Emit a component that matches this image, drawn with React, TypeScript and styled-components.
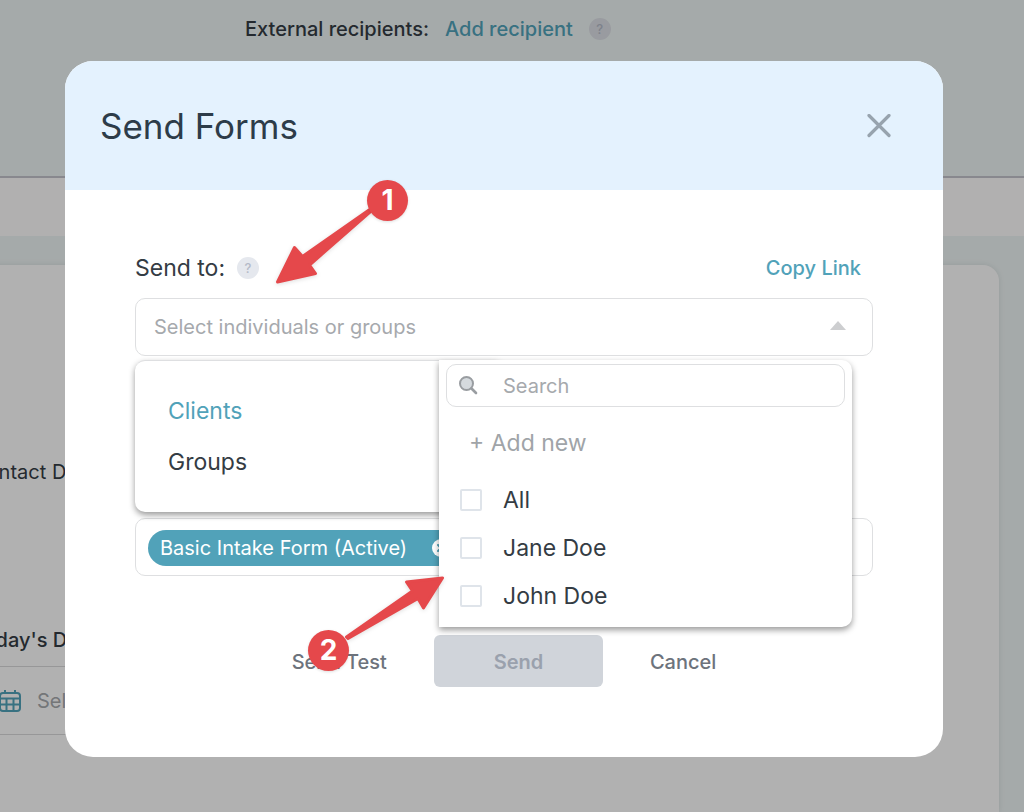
import React from "react";
import styled, { createGlobalStyle } from "styled-components";

const GlobalStyle = createGlobalStyle`
  * { box-sizing: border-box; }
  body {
    margin: 0;
    background: #edf4f4;
    color: #343c44;
    font-family: Inter, "Liberation Sans", sans-serif;
    font-size: 20px;
    line-height: 28px;
  }
  button, input { font: inherit; color: inherit; }
  button { border: 0; padding: 0; background: none; cursor: pointer; }
  a { color: #51a2b9; text-decoration: none; }
`;

const Page = styled.div`
  position: relative;
  min-height: 100vh;
  overflow: hidden;
  display: flex;
  flex-direction: column;
`;

const RecipientBar = styled.header`
  display: flex;
  align-items: flex-start;
  gap: 16px;
  height: 176px;
  padding: 15px 24px 0 245px;
  font-weight: 500;
`;

const TabStrip = styled.nav`
  height: 60px;
  border-top: 2px solid #c3c3cc;
  background: #fefdfd;
`;

const FormCard = styled.section`
  flex: 1;
  margin: 29px 25px 0 -52px;
  padding: 193px 0 0;
  border-radius: 0 16px 0 0;
  background: #fefefe;
  box-shadow: 0 0 6px #00000018;
`;

const FieldName = styled.label<{ $strong?: boolean }>`
  display: block;
  padding-left: 24px;
  font-weight: ${(p) => (p.$strong ? 500 : 400)};
`;

const DateField = styled.div`
  display: flex;
  align-items: center;
  gap: 16px;
  width: 60%;
  height: 69px;
  margin-top: 12px;
  padding-left: 50px;
  border: 1px solid #d8d8da;
  svg { flex: none; color: #51a2b9; }
`;

const PlainInput = styled.input`
  flex: 1;
  min-width: 0;
  padding: 0;
  border: 0;
  outline: 0;
  background: transparent;
  &::placeholder { color: #a6a9ad; opacity: 1; }
`;

const Spacer = styled.div`
  height: 140px;
`;

const Overlay = styled.div`
  position: absolute;
  inset: 0;
  padding: 61px 81px 54px 65px;
  background: #0000004d;
`;

const Dialog = styled.section`
  position: relative;
  border-radius: 28px;
  background: #fff;
`;

const DialogHeader = styled.header`
  display: flex;
  align-items: center;
  justify-content: space-between;
  height: 129px;
  padding: 0 52px 0 35px;
  border-radius: 28px 28px 0 0;
  background: #e4f2fe;
`;

const Title = styled.h2`
  margin: 0;
  color: #2d3c49;
  font-size: 35px;
  line-height: 44px;
  font-weight: 400;
`;

const IconButton = styled.button`
  display: flex;
  color: #97a3ae;
`;

const DialogBody = styled.form`
  padding: 64px 70px 70px;
`;

const LabelRow = styled.div`
  display: flex;
  align-items: center;
  gap: 12px;
  height: 28px;
  margin-bottom: 16px;
  font-size: 23px;
  a { margin-left: auto; padding-right: 12px; font-size: 20px; font-weight: 500; }
`;

const Help = styled.button<{ $dim?: boolean }>`
  width: 22px;
  height: 22px;
  margin-top: ${(p) => (p.$dim ? 3 : 0)}px;
  border-radius: 50%;
  background: ${(p) => (p.$dim ? "#dcdfe5" : "#e5e8ee")};
  color: #b4bac8;
  font-size: 13px;
  line-height: 22px;
  font-weight: 500;
`;

const SelectWrap = styled.div`
  position: relative;
`;

const Field = styled.div`
  display: flex;
  align-items: center;
  height: 58px;
  padding: 0 26px 0 18px;
  border: 1px solid #dedfe1;
  border-radius: 10px;
  background: #fff;
`;

const FormsField = styled(Field)`
  margin-top: 162px;
  padding: 2px 12px 0;
`;

const Chip = styled.span`
  display: flex;
  align-items: center;
  gap: 25px;
  height: 36px;
  padding: 0 12px;
  border-radius: 18px;
  background: #51a2b9;
  color: #fff;
`;

const ChipRemove = styled.button`
  width: 18px;
  height: 18px;
  display: flex;
  align-items: center;
  justify-content: center;
  border-radius: 50%;
  background: #fff;
  color: #51a2b9;
`;

const Menu = styled.div`
  position: absolute;
  z-index: 1;
  top: 62px;
  left: 0;
  width: 50%;
  display: flex;
  flex-direction: column;
  align-items: flex-start;
  gap: 19px;
  padding: 34px 33px 34px;
  border-top: 1px solid #dedfe1;
  border-radius: 10px;
  background: #fff;
  box-shadow: 0 3px 6px #00000066;
`;

const MenuItem = styled.button<{ $active?: boolean }>`
  height: 32px;
  font-size: 23px;
  color: ${(p) => (p.$active ? "#51a2b9" : "#343c44")};
`;

const SubMenu = styled.div`
  position: absolute;
  z-index: 2;
  top: 62px;
  left: 304px;
  right: 21px;
  height: 267px;
  padding: 4px 7px;
  border-radius: 0 10px 10px 0;
  background: #fff;
  box-shadow: 0 3px 6px #00000066;
`;

const SearchBox = styled(Field)`
  gap: 24px;
  height: 43px;
  padding: 0 12px;
`;

const AddNew = styled.button`
  display: block;
  height: 32px;
  margin: 20px 0 17px 23px;
  color: #a0a4a8;
  font-size: 23px;
`;

const Option = styled.label`
  display: flex;
  align-items: center;
  gap: 21px;
  height: 48px;
  padding-left: 14px;
  font-size: 23px;
  cursor: pointer;
`;

const Checkbox = styled.input`
  appearance: none;
  width: 22px;
  height: 22px;
  margin: 0;
  border: 2px solid #dfe4ea;
  border-radius: 2px;
  background: #fff;
  &:checked { background: #51a2b9; }
`;

const Actions = styled.div`
  display: flex;
  justify-content: center;
  align-items: center;
  gap: 47px;
  margin-top: 59px;
`;

const TextButton = styled.button`
  padding-top: 2px;
  color: #6d737c;
  font-weight: 500;
`;

const SendButton = styled.button`
  width: 169px;
  height: 52px;
  padding-top: 2px;
  border-radius: 6px;
  background: #d0d4da;
  color: #9aa1ad;
  font-weight: 600;
`;

const Arrows = styled.svg`
  position: absolute;
  z-index: 3;
  top: 0;
  left: 0;
  pointer-events: none;
  filter: drop-shadow(0 1px 2px #00000022);
`;

const Marker = styled.span<{ $x: number; $y: number }>`
  position: absolute;
  z-index: 4;
  left: ${(p) => p.$x}px;
  top: ${(p) => p.$y}px;
  width: 41px;
  height: 41px;
  border-radius: 50%;
  background: #e5484b;
  color: #fff;
  font-size: 28px;
  line-height: 41px;
  font-weight: 700;
  text-align: center;
  box-shadow: 0 1px 3px #00000022;
`;

const CalendarIcon = () => (
  <svg width="22" height="24" viewBox="0 0 22 24" fill="none" stroke="currentColor" strokeWidth="2">
    <rect x="1" y="4" width="20" height="18" rx="3" />
    <path d="M1 9.500h20M1 15.500h20M7.500 9.500V22M14.500 9.500V22M6 1v4M16 1v4" />
  </svg>
);

const CloseIcon = () => (
  <svg width="24" height="24" viewBox="0 0 24 24" stroke="currentColor" strokeWidth="3.200" strokeLinecap="round">
    <path d="M2 1.500l20 20M22 1.500L2 21.500" />
  </svg>
);

const SearchIcon = () => (
  <svg width="20" height="20" viewBox="0 0 20 20" stroke="#999da1" strokeLinecap="round">
    <circle cx="7.500" cy="7.500" r="6.500" fill="#d5dade" strokeWidth="2" />
    <path d="M12.500 12.500l4.500 4.500" strokeWidth="2.600" />
  </svg>
);

const CaretIcon = () => (
  <svg width="16" height="13" viewBox="0 0 16 13" fill="#cdced0">
    <path d="M8 0l8 9H0z" />
  </svg>
);

const RemoveIcon = () => (
  <svg width="8" height="8" viewBox="0 0 8 8" stroke="currentColor" strokeWidth="2" strokeLinecap="round">
    <path d="M1 1l6 6M7 1L1 7" />
  </svg>
);

const people = ["All", "Jane Doe", "John Doe"];

export default function App() {
  return (
    <>
      <GlobalStyle />
      <Page>
        <RecipientBar>
          <span>External recipients:</span>
          <a href="#add">Add recipient</a>
          <Help $dim aria-label="About external recipients">?</Help>
        </RecipientBar>
        <TabStrip />
        <FormCard>
          <FieldName as="div">Contact Details</FieldName>
          <Spacer />
          <FieldName $strong htmlFor="today">Today's Date</FieldName>
          <DateField>
            <CalendarIcon />
            <PlainInput id="today" placeholder="Select" />
          </DateField>
        </FormCard>

        <Overlay>
          <Dialog role="dialog" aria-labelledby="dialog-title">
            <DialogHeader>
              <Title id="dialog-title">Send Forms</Title>
              <IconButton aria-label="Close"><CloseIcon /></IconButton>
            </DialogHeader>
            <DialogBody onSubmit={(e) => e.preventDefault()}>
              <LabelRow>
                <label htmlFor="send-to">Send to:</label>
                <Help type="button" aria-label="About sending">?</Help>
                <a href="#copy">Copy Link</a>
              </LabelRow>
              <SelectWrap>
                <Field>
                  <PlainInput id="send-to" placeholder="Select individuals or groups" />
                  <CaretIcon />
                </Field>
                <Menu>
                  <MenuItem type="button" $active>Clients</MenuItem>
                  <MenuItem type="button">Groups</MenuItem>
                </Menu>
                <SubMenu>
                  <SearchBox>
                    <SearchIcon />
                    <PlainInput aria-label="Search" placeholder="Search" />
                  </SearchBox>
                  <AddNew type="button">+ Add new</AddNew>
                  {people.map((name) => (
                    <Option key={name}>
                      <Checkbox type="checkbox" />
                      {name}
                    </Option>
                  ))}
                </SubMenu>
              </SelectWrap>
              <FormsField>
                <Chip>
                  Basic Intake Form (Active)
                  <ChipRemove type="button" aria-label="Remove form"><RemoveIcon /></ChipRemove>
                </Chip>
              </FormsField>
              <Actions>
                <TextButton type="button">Send Test</TextButton>
                <SendButton type="submit">Send</SendButton>
                <TextButton type="button">Cancel</TextButton>
              </Actions>
            </DialogBody>
            <Arrows width="400" height="600" viewBox="0 0 400 600" fill="#e5484b" stroke="#e5484b" strokeWidth="3" strokeLinejoin="round">
              <path d="M212.500 221L229.500 186.500L237.500 195.500L304 149l1.500 1.500L244.500 204l6 8.500z" />
              <path d="M377.500 517L341.500 521l6 9L281.500 576l1.500 1.500L353 537.500l5.500 9.500z" />
            </Arrows>
            <Marker $x={302} $y={119}>1</Marker>
            <Marker $x={243} $y={569}>2</Marker>
          </Dialog>
        </Overlay>
      </Page>
    </>
  );
}
